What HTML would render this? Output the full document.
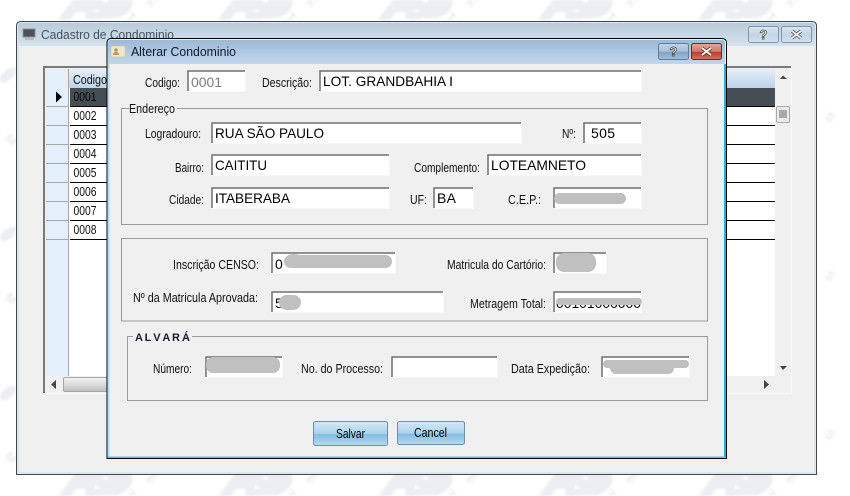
<!DOCTYPE html>
<html><head><meta charset="utf-8"><title>Alterar Condominio</title>
<style>
html,body{margin:0;padding:0;background:#fff;width:850px;height:496px;overflow:hidden}
svg{display:block}
text{font-family:"Liberation Sans",sans-serif;font-size:13px;fill:#111}
.i{font-size:14px;fill:#000}
.t{font-size:13px}
.w{font-size:13px;font-weight:bold;fill:#e9ebf0}
</style></head><body>
<svg width="850" height="496" viewBox="0 0 850 496" xmlns="http://www.w3.org/2000/svg">
<defs>
<pattern id="wm" x="50" y="-60" width="160" height="159" patternUnits="userSpaceOnUse">
<g fill="#eceef3">
<path d="M8 80 L24 58 Q30 52 42 52 L46 78 L36 78 L35 72 L26 72 L20 80Z"/>
<path d="M38 56 Q48 48 66 52 L64 60 Q54 58 52 62 Q66 64 62 72 Q56 82 34 78 L38 70 Q48 74 50 70 Q38 68 38 56Z"/>
<path d="M60 52 L76 54 Q88 60 78 72 Q70 80 54 78Z"/>
</g>
<text x="75" y="78" transform="rotate(45 75 78)" class="w">T</text>
<text x="96" y="62" transform="rotate(45 96 62)" class="w">E</text>
<text x="114" y="40" transform="rotate(45 114 40)" class="w">M</text>
<text x="134" y="18" transform="rotate(45 134 18)" class="w">S</text>
<ellipse cx="118" cy="135" rx="10" ry="5" transform="rotate(-40 118 135)" fill="#eceef3"/>
</pattern>
<linearGradient id="ot" x1="0" y1="0" x2="0" y2="1"><stop offset="0" stop-color="#b9cbdc"/><stop offset="1" stop-color="#d6e3ef"/></linearGradient>
<linearGradient id="it" x1="0" y1="0" x2="0" y2="1"><stop offset="0" stop-color="#9dbad8"/><stop offset="1" stop-color="#c2d6ec"/></linearGradient>
<linearGradient id="hd" x1="0" y1="0" x2="0" y2="1"><stop offset="0" stop-color="#e6f0fa"/><stop offset="1" stop-color="#bdd3ea"/></linearGradient>
<linearGradient id="bt" x1="0" y1="0" x2="0" y2="1"><stop offset="0" stop-color="#d5e9f6"/><stop offset=".5" stop-color="#a9d3ec"/><stop offset=".55" stop-color="#84bde0"/><stop offset="1" stop-color="#b4dcf3"/></linearGradient>
<linearGradient id="tb1" x1="0" y1="0" x2="0" y2="1"><stop offset="0" stop-color="#dbe6f0"/><stop offset=".5" stop-color="#c4d5e6"/><stop offset="1" stop-color="#d3e0ed"/></linearGradient>
<linearGradient id="tb2" x1="0" y1="0" x2="0" y2="1"><stop offset="0" stop-color="#c3d6e8"/><stop offset=".5" stop-color="#a3bfd9"/><stop offset=".55" stop-color="#7ea3c6"/><stop offset="1" stop-color="#a3c0da"/></linearGradient>
<linearGradient id="tb3" x1="0" y1="0" x2="0" y2="1"><stop offset="0" stop-color="#e2a79c"/><stop offset=".5" stop-color="#cf7a6c"/><stop offset=".55" stop-color="#b73f2c"/><stop offset="1" stop-color="#cf7666"/></linearGradient>
<linearGradient id="sb" x1="0" y1="0" x2="0" y2="1"><stop offset="0" stop-color="#f2f2f2"/><stop offset=".5" stop-color="#dcdcdc"/><stop offset="1" stop-color="#bcbcbc"/></linearGradient>
<filter id="bl" x="0" y="0" width="100%" height="100%"><feGaussianBlur stdDeviation="1.4"/></filter>
</defs>

<rect width="850" height="496" fill="#fff"/>
<rect width="850" height="496" fill="url(#wm)" filter="url(#bl)"/>

<!-- outer window -->
<path d="M16.5 474.500V26Q16.500 21.500 21 21.500H812Q816.500 21.500 816.500 26V474.500Z" fill="#dce8f2" stroke="#454545"/>
<path d="M18 46V27Q18 23 21 23H812Q815 23 815 27V46Z" fill="url(#ot)"/>
<rect x="18" y="46" width="797" height="427" fill="#dbe8f3"/>
<rect x="19" y="46" width="795" height="426" fill="#f0f0f0"/>
<rect x="23" y="29" width="12" height="8" fill="#4d5157" stroke="#8a8f96"/>
<rect x="25" y="38" width="9" height="2" fill="#b9bdc2"/>
<text x="41" y="39" class="t" style="fill:#44515e" textLength="133" lengthAdjust="spacingAndGlyphs">Cadastro de Condominio</text>
<rect x="748.500" y="26.500" width="30" height="16" rx="2" fill="url(#tb1)" stroke="#7f97ae"/>
<text x="763.500" y="39" text-anchor="middle" style="font-size:13px;font-weight:bold;fill:#fff;stroke:#444;stroke-width:.7">?</text>
<rect x="781.500" y="26.500" width="30" height="16" rx="2" fill="url(#tb1)" stroke="#7f97ae"/>
<path d="M792 31L801 38M801 31L792 38" stroke="#555" stroke-width="3.4"/><path d="M792 31L801 38M801 31L792 38" stroke="#eee" stroke-width="1.8"/>

<!-- grid -->
<rect x="43" y="66" width="749" height="328" fill="#f0f0f0"/>
<path d="M44 393V67H791" fill="none" stroke="#7b7b7b" stroke-width="2"/>
<path d="M44 393.500H791.500V67" fill="none" stroke="#fafafa"/>
<rect x="46" y="69" width="729" height="307" fill="#fff"/>
<rect x="46" y="69" width="729" height="19" fill="url(#hd)"/>
<rect x="46" y="69" width="22" height="307" fill="#e4f0fb"/>
<rect x="68" y="69" width="1" height="307" fill="#a8a8a8"/>
<rect x="70" y="88" width="705" height="18" fill="#454e54"/>
<g fill="#000">
<rect x="70" y="106" width="705" height="1"/><rect x="70" y="125" width="705" height="1"/><rect x="70" y="144" width="705" height="1"/><rect x="70" y="163" width="705" height="1"/><rect x="70" y="182" width="705" height="1"/><rect x="70" y="201" width="705" height="1"/><rect x="70" y="220" width="705" height="1"/><rect x="70" y="239" width="705" height="1"/>
</g>
<g fill="#a8a8a8">
<rect x="46" y="106" width="22" height="1"/><rect x="46" y="125" width="22" height="1"/><rect x="46" y="144" width="22" height="1"/><rect x="46" y="163" width="22" height="1"/><rect x="46" y="182" width="22" height="1"/><rect x="46" y="201" width="22" height="1"/><rect x="46" y="220" width="22" height="1"/><rect x="46" y="239" width="22" height="1"/>
</g>
<path d="M56 91.500L62 97L56 102.500Z" fill="#000"/>
<text x="73" y="84" textLength="34" lengthAdjust="spacingAndGlyphs">Codigo</text>
<text x="73.500" y="101" style="fill:#000" textLength="23" lengthAdjust="spacingAndGlyphs">0001</text>
<text x="73.500" y="120" textLength="23" lengthAdjust="spacingAndGlyphs">0002</text>
<text x="73.500" y="139" textLength="23" lengthAdjust="spacingAndGlyphs">0003</text>
<text x="73.500" y="158" textLength="23" lengthAdjust="spacingAndGlyphs">0004</text>
<text x="73.500" y="177" textLength="23" lengthAdjust="spacingAndGlyphs">0005</text>
<text x="73.500" y="196" textLength="23" lengthAdjust="spacingAndGlyphs">0006</text>
<text x="73.500" y="215" textLength="23" lengthAdjust="spacingAndGlyphs">0007</text>
<text x="73.500" y="234" textLength="23" lengthAdjust="spacingAndGlyphs">0008</text>
<!-- scrollbars -->
<path d="M780 79L783 75.500L787 79Z" fill="#444"/>
<rect x="776.500" y="106.500" width="13" height="16" rx="1.500" fill="#ececec" stroke="#a9a9a9"/>
<path d="M779 111H787M779 113H787M779 115H787M779 117H787" stroke="#666"/>
<path d="M780 366L783 370L787 366Z" fill="#444"/>
<path d="M56 380V389L51 384.500Z" fill="#444"/>
<rect x="63.500" y="377.500" width="44" height="14" rx="1.500" fill="url(#sb)" stroke="#a5a5a5"/>
<path d="M764 380V389L769 384.500Z" fill="#444"/>

<!-- dialog -->
<path d="M107 458.500V43Q107 38.500 111 38.500H722Q726.500 38.500 726.500 43V458.500Z" fill="#f0f0f0" stroke="#000" stroke-width="1"/>
<path d="M108 64V43Q108 40 111 40H722Q725 40 725 43V64Z" fill="url(#it)"/>
<rect x="108" y="64" width="1.500" height="393" fill="#bcdcf2"/>
<rect x="724" y="64" width="2" height="393" fill="#27aedb"/>
<rect x="108" y="456.500" width="618" height="1.500" fill="#56bfe6"/>
<rect x="111" y="46" width="14" height="11" rx="1.500" fill="#f1e7c6" stroke="#d4c79d" stroke-width=".6"/>
<path d="M113 55Q113 52 116 52Q119 52 119 55Z" fill="#b39a63"/><circle cx="116" cy="50" r="1.800" fill="#b39a63"/>
<text x="131" y="56" class="t" style="fill:#0f1a2a" textLength="105" lengthAdjust="spacingAndGlyphs">Alterar Condominio</text>
<rect x="658.500" y="43.500" width="30" height="16" rx="2" fill="url(#tb2)" stroke="#5f7c9a"/>
<text x="673.500" y="56" text-anchor="middle" style="font-size:13px;font-weight:bold;fill:#fff;stroke:#333;stroke-width:.7">?</text>
<rect x="691.500" y="43.500" width="30" height="16" rx="2" fill="url(#tb3)" stroke="#6e2a1e"/>
<path d="M702 48L711 55M711 48L702 55" stroke="#5c2a20" stroke-width="3.4"/><path d="M702 48L711 55M711 48L702 55" stroke="#fff" stroke-width="1.900"/>

<!-- group boxes -->
<g fill="none" stroke="#9b9b9b">
<path d="M129 108.500H121.500V224.500H707.500V108.500H177"/>
<rect x="121.500" y="238.500" width="586" height="82.500"/>
<path d="M133 336.500H127.500V400.500H707.500V336.500H192"/>
</g>
<text x="129" y="113" textLength="46" lengthAdjust="spacingAndGlyphs">Endereço</text>
<text x="135" y="341" style="font-size:11px;font-weight:bold;fill:#1a1a30" textLength="55">A L V A R Á</text>

<!-- fields -->
<g fill="#fff" stroke="#f8f8f8">
<rect x="187.500" y="70.500" width="58" height="21"/>
<rect x="319.500" y="70.500" width="322" height="21"/>
<rect x="211.500" y="122.500" width="310" height="21"/>
<rect x="583.500" y="122.500" width="58" height="21"/>
<rect x="211.500" y="154.500" width="178" height="21"/>
<rect x="487.500" y="154.500" width="154" height="21"/>
<rect x="211.500" y="187.500" width="178" height="21"/>
<rect x="433.500" y="187.500" width="40" height="21"/>
<rect x="553.500" y="187.500" width="88" height="21"/>
<rect x="271.500" y="252.500" width="124" height="21"/>
<rect x="553.500" y="252.500" width="53" height="21"/>
<rect x="271.500" y="291.500" width="172" height="21"/>
<rect x="553.500" y="291.500" width="88" height="21"/>
<rect x="205.500" y="356.500" width="77" height="21"/>
<rect x="391.500" y="356.500" width="106" height="21"/>
<rect x="601.500" y="356.500" width="88" height="21"/>
</g>
<g fill="none" stroke="#6e6e6e" stroke-width="1.500">
<path d="M188 91V71H245"/><path d="M320 91V71H641"/>
<path d="M212 143V123H521"/><path d="M584 143V123H641"/>
<path d="M212 175V155H389"/><path d="M488 175V155H641"/>
<path d="M212 208V188H389"/><path d="M434 208V188H473"/><path d="M554 208V188H641"/>
<path d="M272 273V253H395"/><path d="M554 273V253H606"/>
<path d="M272 312V292H443"/><path d="M554 312V292H641"/>
<path d="M206 377V357H282"/><path d="M392 377V357H497"/><path d="M602 377V357H689"/>
</g>

<!-- field values -->
<text x="191" y="87" class="i" style="fill:#7d7d7d" textLength="31">0001</text>
<text x="323" y="86" class="i" textLength="130" lengthAdjust="spacingAndGlyphs">LOT. GRANDBAHIA I</text>
<text x="215" y="138" class="i" textLength="109" lengthAdjust="spacingAndGlyphs">RUA SÃO PAULO</text>
<text x="591" y="138" class="i" textLength="24">505</text>
<text x="215" y="170" class="i" textLength="52" lengthAdjust="spacingAndGlyphs">CAITITU</text>
<text x="491" y="170" class="i" textLength="95" lengthAdjust="spacingAndGlyphs">LOTEAMNETO</text>
<text x="215" y="203" class="i" textLength="75" lengthAdjust="spacingAndGlyphs">ITABERABA</text>
<text x="437" y="203" class="i" textLength="19">BA</text>
<text x="275" y="269" class="i">0</text>
<text x="275" y="308" class="i">5</text>
<text x="556" y="308" class="i" textLength="85" lengthAdjust="spacingAndGlyphs">00101000000</text>

<!-- blurred masks -->
<g fill="#c0c0c0">
<rect x="554" y="193" width="72" height="11" rx="5.500"/>
<rect x="284" y="255" width="108" height="13" rx="6.500"/><ellipse cx="294" cy="258" rx="8" ry="4"/>
<rect x="556" y="253" width="40" height="19" rx="8"/>
<rect x="279" y="295" width="22" height="15" rx="7.500"/>
<rect x="556" y="298" width="86" height="7" rx="3.500"/>
<rect x="206" y="357" width="74" height="16" rx="7"/>
<rect x="603" y="360" width="86" height="8" rx="4"/><rect x="610" y="362" width="64" height="12" rx="6"/>
</g>

<!-- labels -->
<text x="145" y="87" textLength="35" lengthAdjust="spacingAndGlyphs">Codigo:</text>
<text x="262" y="87" textLength="50" lengthAdjust="spacingAndGlyphs">Descrição:</text>
<text x="145" y="138" textLength="56" lengthAdjust="spacingAndGlyphs">Logradouro:</text>
<text x="562" y="138" textLength="14" lengthAdjust="spacingAndGlyphs">Nº:</text>
<text x="175" y="172" textLength="29" lengthAdjust="spacingAndGlyphs">Bairro:</text>
<text x="414" y="172" textLength="66" lengthAdjust="spacingAndGlyphs">Complemento:</text>
<text x="169" y="204" textLength="35" lengthAdjust="spacingAndGlyphs">Cidade:</text>
<text x="410" y="204" textLength="17" lengthAdjust="spacingAndGlyphs">UF:</text>
<text x="508" y="204" textLength="33" lengthAdjust="spacingAndGlyphs">C.E.P.:</text>
<text x="173" y="269" textLength="86" lengthAdjust="spacingAndGlyphs">Inscrição CENSO:</text>
<text x="447" y="269" textLength="99" lengthAdjust="spacingAndGlyphs">Matricula do Cartório:</text>
<text x="133" y="302" textLength="125" lengthAdjust="spacingAndGlyphs">Nº da Matricula Aprovada:</text>
<text x="470" y="308" textLength="76" lengthAdjust="spacingAndGlyphs">Metragem Total:</text>
<text x="153" y="373" textLength="39" lengthAdjust="spacingAndGlyphs">Número:</text>
<text x="301" y="373" textLength="82" lengthAdjust="spacingAndGlyphs">No. do Processo:</text>
<text x="511" y="373" textLength="79" lengthAdjust="spacingAndGlyphs">Data Expedição:</text>

<!-- buttons -->
<rect x="313.500" y="421.500" width="74" height="24" rx="2" fill="url(#bt)" stroke="#6d8fae"/>
<text x="336" y="438" style="fill:#000" textLength="29" lengthAdjust="spacingAndGlyphs">Salvar</text>
<rect x="397.500" y="421.500" width="67" height="23" rx="2" fill="url(#bt)" stroke="#6d8fae"/>
<text x="414" y="437" style="fill:#000" textLength="33" lengthAdjust="spacingAndGlyphs">Cancel</text>
</svg>
</body></html>
